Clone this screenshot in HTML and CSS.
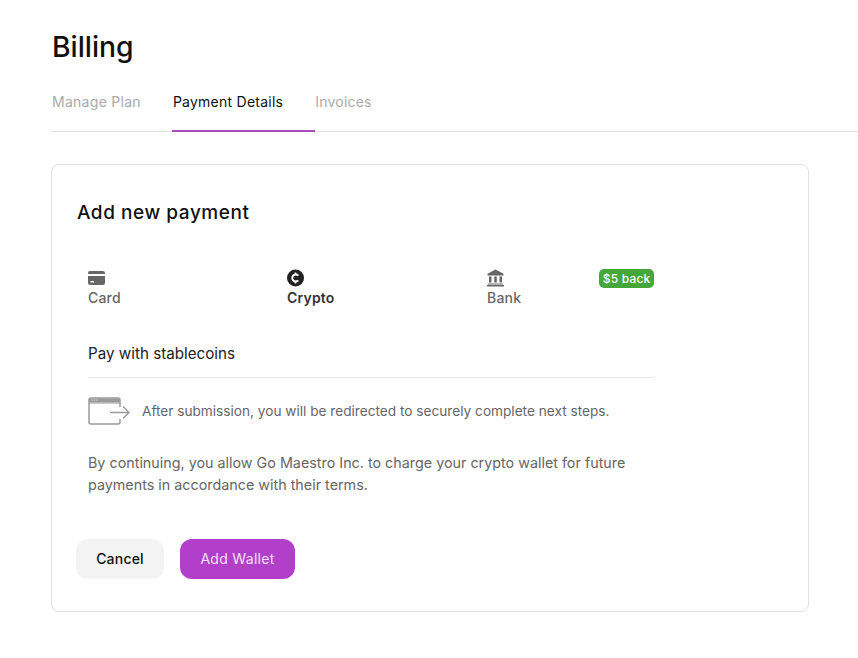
FILE: index.html
```html
<!DOCTYPE html>
<html lang="en">
<head>
<meta charset="utf-8">
<title>Billing</title>
<link rel="stylesheet" href="styles.css">
</head>
<body>
<main class="page">
  <h1 class="title">Billing</h1>
  <nav class="tabs">
    <a class="tab">Manage Plan</a>
    <a class="tab active">Payment Details</a>
    <a class="tab">Invoices</a>
  </nav>
  <section class="card">
    <h2 class="card-title">Add new payment</h2>
    <div class="methods">
      <div class="method">
        <svg class="micon" width="18" height="14" viewBox="0 0 18 14"><path fill="#666" d="M2.500 0h12.400A2.200 2.200 0 0 1 17 2.200V3H0v-.8A2.200 2.200 0 0 1 2.500 0zM0 5h17v6.800a2.200 2.200 0 0 1-2.200 2.200H2.200A2.200 2.200 0 0 1 0 11.800zM2.500 10v1.500h3.500V10z"/></svg>
        <span>Card</span>
      </div>
      <div class="method selected">
        <svg class="micon" width="18" height="18" viewBox="0 0 18 18"><circle cx="8.500" cy="9" r="8.500" fill="#222"/><path d="M11.300 6.600A3.500 3.500 0 1 0 11.300 11.400" fill="none" stroke="#fff" stroke-width="1.900"/><path d="M8.500 3.400v2M8.500 12.600v2" stroke="#fff" stroke-width="1.600"/></svg>
        <span>Crypto</span>
      </div>
      <div class="method">
        <svg class="micon" width="18" height="17" viewBox="0 0 18 17"><path fill="#666" d="M8.500 0l8 4.200V6H.5V4.200zM2 7h2.500v6H2zM7.200 7h2.600v6H7.200zM12.500 7H15v6h-2.500zM1 14h15v1H1zM0 15.500h17V17H0z"/></svg>
        <span>Bank</span>
        <b class="badge">$5 back</b>
      </div>
    </div>
    <div class="details">
      <p class="pay-title">Pay with stablecoins</p>
      <div class="notice">
        <svg class="redirect" width="42" height="28" viewBox="0 0 42 28" fill="none" stroke="#9a9a9a" stroke-width="1.500"><path d="M32 10V3a2 2 0 0 0-2-2H3a2 2 0 0 0-2 2v22a2 2 0 0 0 2 2h27a2 2 0 0 0 2-2v-3"/><path d="M1 3.500h31" stroke-width="4"/><path d="M1 6h31" stroke-width="1"/><path d="M3.500 3h1M6 3h1M8.500 3h1" stroke="#fff" stroke-width="1.200"/><path d="M22 15.500h19M35 9.500l6 6-6 6"/></svg>
        <p>After submission, you will be redirected to securely complete next steps.</p>
      </div>
      <p class="terms">By continuing, you allow Go Maestro Inc. to charge your crypto wallet for future payments in accordance with their terms.</p>
    </div>
    <div class="actions">
      <button class="btn btn-cancel">Cancel</button>
      <button class="btn btn-primary">Add Wallet</button>
    </div>
  </section>
</main>
</body>
</html>
```
FILE: styles.css
```css
* { box-sizing: border-box; }
html, body { margin: 0; padding: 0; background: #fff; }
body { font-family: Inter, "Liberation Sans", sans-serif; color: #111; width: 858px; height: 658px; overflow: hidden; }
.page { padding: 30px 0 0 52px; }
.title { margin: 0; font-size: 28.300px; line-height: 34px; font-weight: 500; color: #111; }
.tabs { display: flex; margin: 19px 0 0 -1px; height: 49px; border-bottom: 1px solid #e2e2e2; }
.tab { padding: 10px 0 0; font-size: 14px; line-height: 18px; color: #aaa; letter-spacing: .2px; margin-right: 32px; height: 49px; }
.tab:first-child { padding-left: 1px; letter-spacing: .28px; }
.tab.active { color: #111; border-bottom: 2px solid #a64db8; padding: 10px 32px 0 1px; margin: 0 0 0 -1px; letter-spacing: .25px; }
.card { width: 758px; height: 448px; margin: 32px 0 0 -1px; border: 1px solid #e0e0e0; border-radius: 8px; padding: 36px 24px 0; }
.card-title { margin: 0 0 0 1px; font-size: 19px; line-height: 24px; font-weight: 500; color: #111; letter-spacing: .55px; }
.methods { display: grid; grid-template-columns: 199px 200px 1fr; margin: 44px 0 0 12px; height: 50px; width: 566px; }
.method { position: relative; display: flex; flex-direction: column; font-size: 14px; line-height: 18px; font-weight: 500; color: #666; letter-spacing: .2px; }
.method .micon { display: block; height: 18px; margin-bottom: 2px; }
.method.selected { color: #333; font-weight: 600; }
.badge { position: absolute; top: 0; right: 0; height: 19px; padding: 0 3.500px; border-radius: 5px; background: #45a63a; color: #fff; font-size: 12px; line-height: 19px; font-weight: 500; }
.details { width: 567px; margin: 25px 0 0 12px; }
.pay-title { margin: 0; padding-bottom: 13px; border-bottom: 1px solid #e8e8e8; font-size: 15.200px; line-height: 20px; color: #222; }
.notice { display: flex; align-items: center; gap: 12px; margin-top: 19px; height: 28px; }
.notice p { margin: 0; font-size: 13.650px; line-height: 18px; color: #666; }
.redirect { flex: none; width: 42px; height: 28px; }
.terms { margin: 27px 0 0; font-size: 14.330px; line-height: 22px; color: #666; }
.actions { display: flex; gap: 16px; margin: 43px 0 0; }
.btn { height: 40px; border: 0; border-radius: 12px; font: 500 14px/40px Inter, "Liberation Sans", sans-serif; letter-spacing: .2px; padding: 0; }
.btn-cancel { width: 88px; background: #f3f3f3; color: #111; }
.btn-primary { width: 115px; background: #b23fc9; color: #f4e2f7; font-weight: 400; letter-spacing: .3px; }
```
